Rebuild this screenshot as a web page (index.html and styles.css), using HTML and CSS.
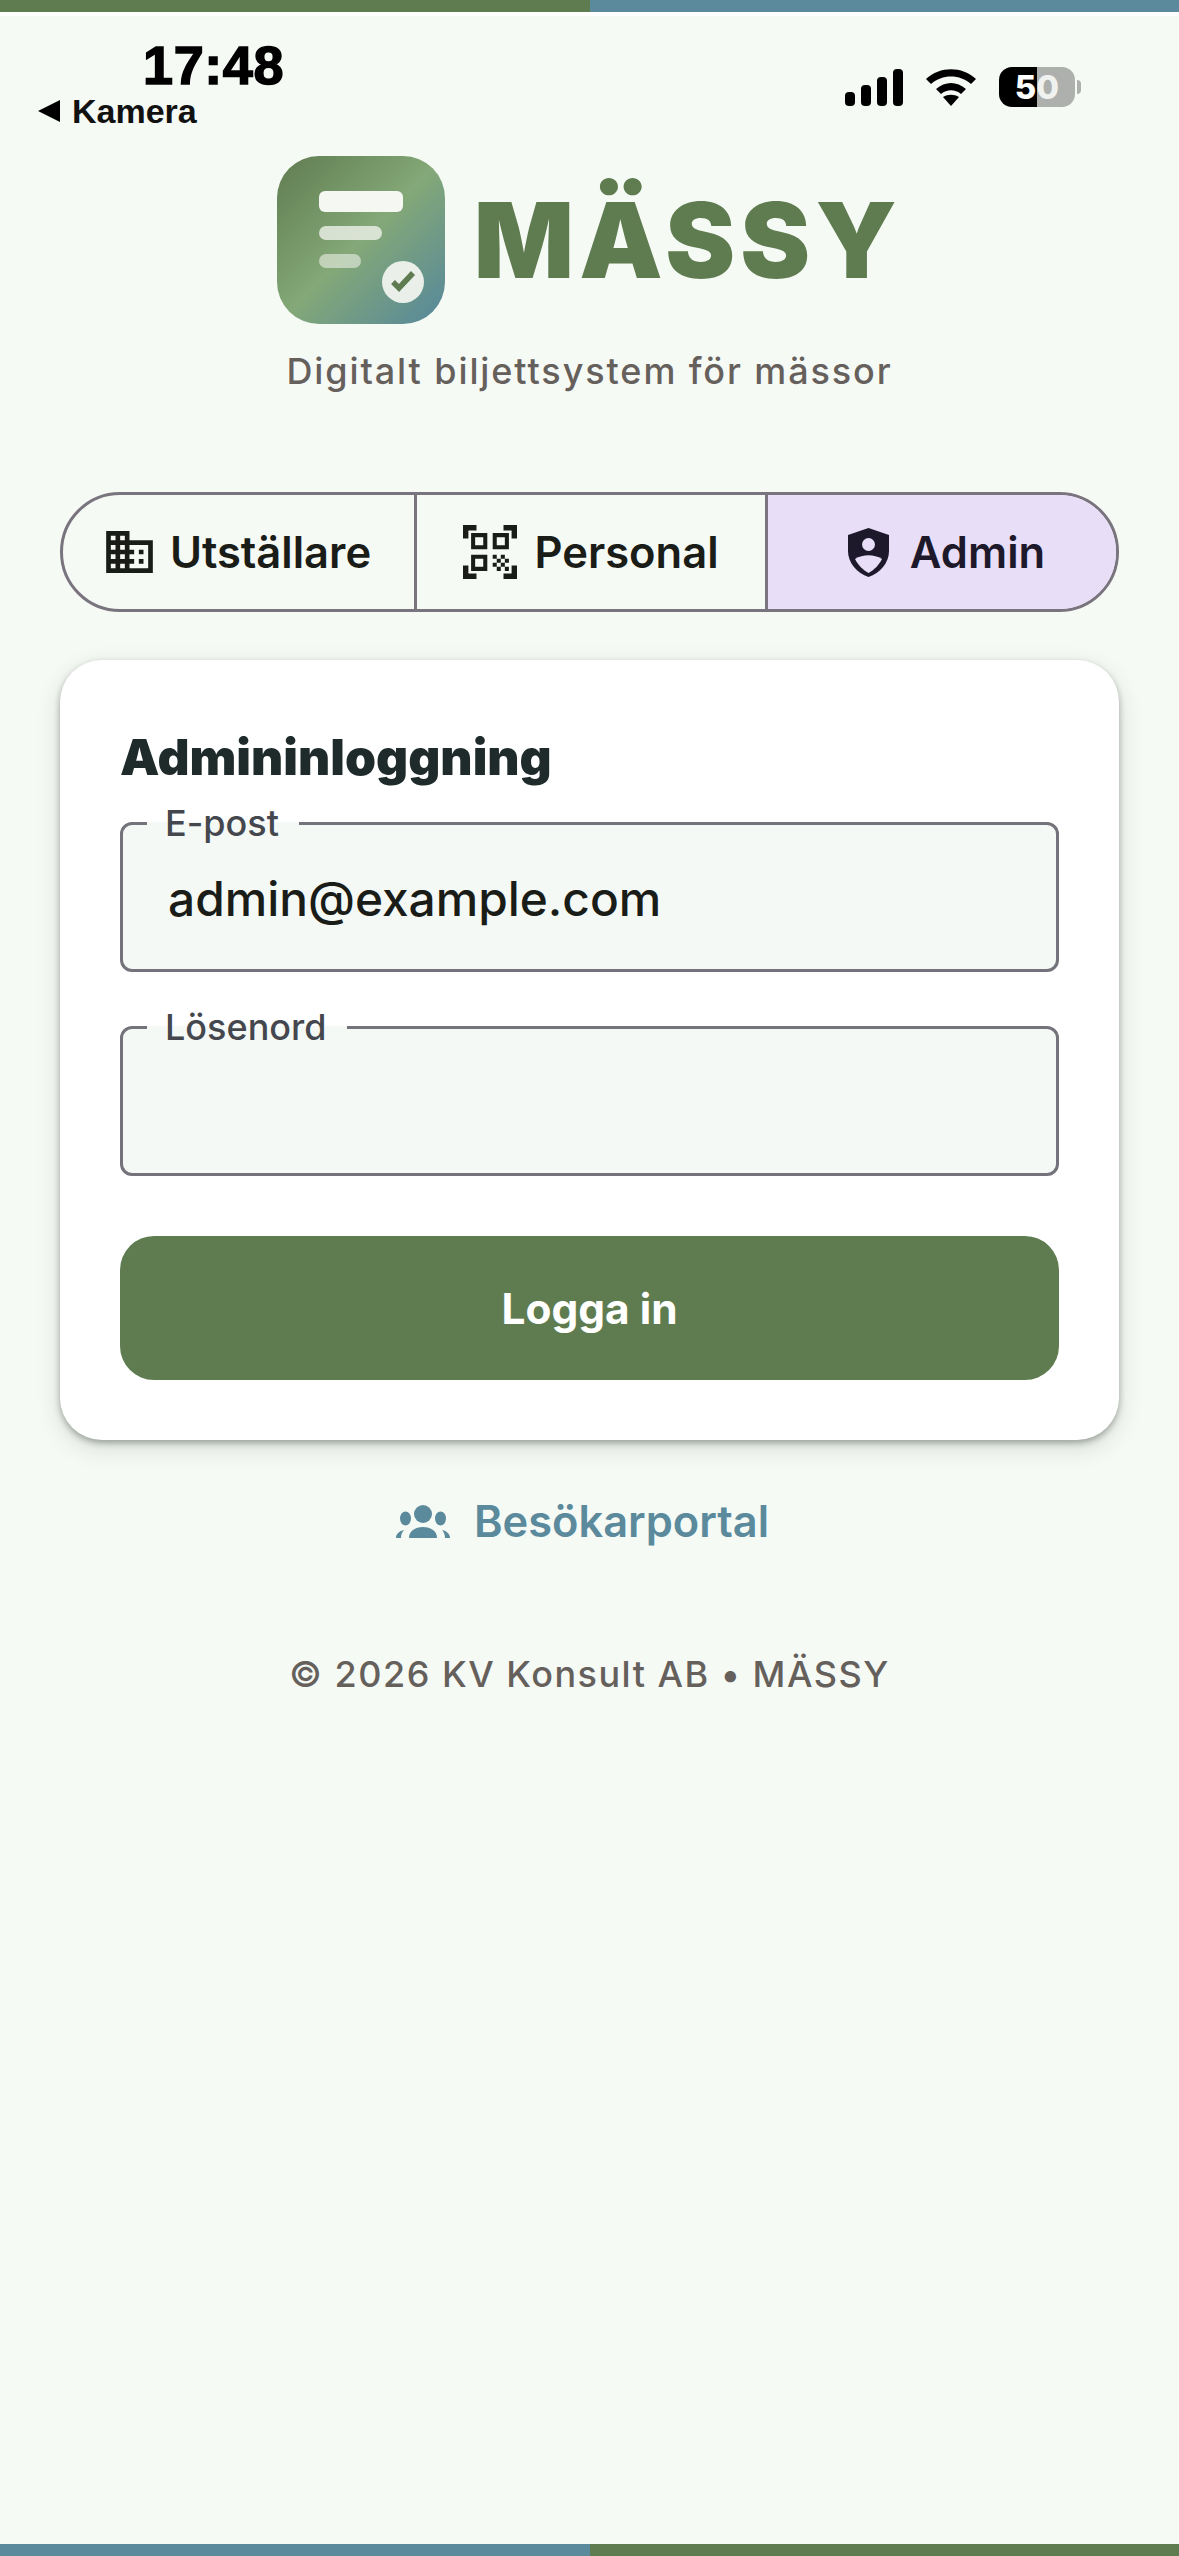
FILE: index.html
```html
<!DOCTYPE html>
<html lang="sv">
<head>
<meta charset="utf-8">
<title>MÄSSY</title>
<link rel="stylesheet" href="styles.css">
</head>
<body>
<div class="page">
  <div class="stripe stripe-top"><span class="green"></span><span class="blue"></span></div>

  <header class="status">
    <div class="status-left">
      <div class="time">17:48</div>
      <div class="back"><span class="back-arrow"></span><span>Kamera</span></div>
    </div>
    <div class="status-right">
      <svg class="signal" viewBox="0 0 58 37" aria-hidden="true">
        <rect x="0" y="23" width="10" height="14" rx="4"/>
        <rect x="16" y="16" width="10" height="21" rx="4"/>
        <rect x="32" y="8" width="10" height="29" rx="4"/>
        <rect x="48" y="0" width="10" height="37" rx="4"/>
      </svg>
      <svg class="wifi" viewBox="0 0 52 38" aria-hidden="true">
        <path d="M1 11C15-2 37-2 51 11l-5 5C35 6 17 6 6 16z"/>
        <path d="M11 21c9-8 21-8 30 0l-5 5c-6-5-14-5-20 0z"/>
        <path d="M18 29c5-3 11-3 16 0l-8 9z"/>
      </svg>
      <div class="battery-wrap">
        <div class="battery"><span class="five">5</span><span class="zero">0</span></div>
        <span class="nub"></span>
      </div>
    </div>
  </header>

  <main class="content">
    <div class="brand">
      <svg class="logo" viewBox="0 0 168 168" aria-hidden="true">
        <defs>
          <linearGradient id="lg" x1="0" y1="0" x2="1" y2="1">
            <stop offset="0" stop-color="#5f7c50"/>
            <stop offset=".5" stop-color="#84a877"/>
            <stop offset="1" stop-color="#55879c"/>
          </linearGradient>
        </defs>
        <rect width="168" height="168" rx="42" fill="url(#lg)"/>
        <rect x="42" y="35" width="84" height="21" rx="6" fill="#f5f7f3"/>
        <rect x="42" y="70" width="63" height="14" rx="7" fill="#f5f7f3" opacity=".75"/>
        <rect x="42" y="98" width="42" height="14" rx="7" fill="#f5f7f3" opacity=".55"/>
        <circle cx="126" cy="126" r="21" fill="#eaf0e9"/>
        <path d="M116 126l6 6 14-15" fill="none" stroke="#5f7c50" stroke-width="5.5"/>
      </svg>
      <h1 class="wordmark">MÄSSY</h1>
    </div>
    <p class="tagline">Digitalt biljettsystem för mässor</p>

    <nav class="tabs">
      <button class="tab" type="button">
        <svg class="ico ico-domain" viewBox="2 3 20 18" aria-hidden="true"><path d="M12 7V3H2v18h20V7H12zM6 19H4v-2h2v2zm0-4H4v-2h2v2zm0-4H4V9h2v2zm0-4H4V5h2v2zm4 12H8v-2h2v2zm0-4H8v-2h2v2zm0-4H8V9h2v2zm0-4H8V5h2v2zm10 12h-8v-2h2v-2h-2v-2h2v-2h-2V9h8v10zm-2-8h-2v2h2v-2zm0 4h-2v2h2v-2z"/></svg>
        <span>Utställare</span>
      </button>
      <button class="tab" type="button">
        <svg class="ico ico-qr" viewBox="2 2 20 20" aria-hidden="true"><path d="M9.5 6.5v3h-3v-3h3M11 5H5v6h6V5zm-1.5 9.5v3h-3v-3h3M11 13H5v6h6v-6zm6.5-6.5v3h-3v-3h3M19 5h-6v6h6V5zm-6 8h1.5v1.5H13V13zm1.5 1.5H16V16h-1.5v-1.5zM16 13h1.5v1.5H16V13zm-3 3h1.5v1.5H13V16zm1.5 1.5H16V19h-1.5v-1.5zM16 16h1.5v1.5H16V16zm1.5-1.5H19V16h-1.5v-1.5zm0 3H19V19h-1.5v-1.5zM22 7h-2V4h-3V2h5v5zm0 15v-5h-2v3h-3v2h5zM2 22h5v-2H4v-3H2v5zM2 2v5h2V4h3V2H2z"/></svg>
        <span>Personal</span>
      </button>
      <button class="tab tab-active" type="button">
        <svg class="ico ico-shield" viewBox="0 0 41 49" aria-hidden="true">
          <path d="M20.5 0L41 7v16c0 12-9 22-20.500 26C9 45 0 35 0 23V7z" fill="#1d192b"/>
          <circle cx="20.500" cy="16.500" r="6.500" fill="#e8def8"/>
          <path d="M7 31c8-5 19-5 27 0-3 6-8 11-13.500 14C15 42 10 37 7 31z" fill="#e8def8"/>
        </svg>
        <span>Admin</span>
      </button>
    </nav>

    <section class="card">
      <h2 class="card-title">Admininloggning</h2>
      <fieldset class="field">
        <legend>E-post</legend>
        <input class="field-input" type="email" value="admin@example.com" aria-label="E-post">
      </fieldset>
      <fieldset class="field field-second">
        <legend>Lösenord</legend>
        <input class="field-input" type="password" aria-label="Lösenord">
      </fieldset>
      <button class="submit" type="button">Logga in</button>
    </section>

    <a class="visitor" href="#">
      <svg class="ico-groups" viewBox="0 0 54 33" aria-hidden="true">
        <circle cx="27" cy="9" r="9"/>
        <ellipse cx="9.500" cy="13.500" rx="5.500" ry="7"/>
        <ellipse cx="44.500" cy="13.500" rx="5.500" ry="7"/>
        <path d="M13 33c0-7 6-11 14-11s14 4 14 11z"/>
        <path d="M0 33c0-4 3-7 8-8-2 2-3 5-3 8z"/>
        <path d="M54 33c0-4-3-7-8-8 2 2 3 5 3 8z"/>
      </svg>
      <span>Besökarportal</span>
    </a>

    <p class="copyright">© 2026 KV Konsult AB • MÄSSY</p>
  </main>

  <div class="stripe stripe-bottom"><span class="blue"></span><span class="green"></span></div>
</div>
</body>
</html>
```

FILE: styles.css
```css
* { box-sizing: border-box; }

html, body {
  margin: 0;
  height: 100%;
}

body {
  background: #f6faf5;
  font-family: Inter, "Liberation Sans", sans-serif;
  color: #1a1c18;
}

.page {
  height: 2556px;
  display: flex;
  flex-direction: column;
  overflow: hidden;
}

.stripe {
  display: flex;
  height: 12px;
  flex: none;
}

.stripe span { flex: 1; }
.green { background: #5f7c50; }
.blue { background: #5b8a9c; }

.stripe-top { box-shadow: 0 4px 0 #ffffff; }

/* status bar */
.status {
  flex: none;
  height: 144px;
  display: flex;
  justify-content: space-between;
  align-items: flex-start;
  padding: 0 98px 0 38px;
}

.status-left {
  display: flex;
  flex-direction: column;
  font-family: "Liberation Sans", Arial, sans-serif;
  font-weight: 700;
  color: #000;
}

.time {
  padding: 26px 0 0 105px;
  font-size: 54px;
  line-height: 54px;
  letter-spacing: 0.6px;
  -webkit-text-stroke: 1.5px #000;
}

.back {
  display: flex;
  align-items: center;
  gap: 12px;
  margin-top: 1px;
  font-size: 34px;
  line-height: 36px;
  color: #111;
}

.back-arrow {
  width: 0;
  height: 0;
  border-top: 11px solid transparent;
  border-bottom: 11px solid transparent;
  border-right: 22px solid #000;
}

.status-right {
  display: flex;
  align-items: center;
  padding-top: 55px;
}

.signal { width: 58px; height: 37px; margin-right: 22px; }
.wifi { width: 52px; height: 38px; margin-right: 22px; }

.battery-wrap {
  display: flex;
  align-items: center;
  gap: 2px;
}

.battery {
  width: 76px;
  height: 40px;
  border-radius: 13px;
  background: linear-gradient(90deg, #000 50%, #adb0ac 50%);
  display: flex;
  justify-content: center;
  align-items: center;
  font-family: Inter, sans-serif;
  font-weight: 800;
  font-size: 33px;
  line-height: 1;
}

.five { color: #fff; }
.zero { color: #f0f2ef; }

.nub {
  width: 4px;
  height: 14px;
  border-radius: 0 4px 4px 0;
  background: #adb0ac;
}

/* brand */
.content {
  flex: 1;
  display: flex;
  flex-direction: column;
  padding: 0 60px;
}

.brand {
  display: flex;
  align-items: center;
  justify-content: center;
  gap: 29px;
}

.logo { width: 168px; height: 168px; flex: none; }

.wordmark {
  margin: 0;
  font-size: 105px;
  font-weight: 900;
  line-height: 168px;
  letter-spacing: 5.3px;
  color: #5f7c50;
}

.tagline {
  margin: 22px 0 0;
  text-align: center;
  font-size: 36px;
  line-height: 50px;
  font-weight: 500;
  letter-spacing: 1.9px;
  color: #66605c;
}

/* tabs */
.tabs {
  display: flex;
  height: 120px;
  margin-top: 96px;
  border: 3px solid #79747e;
  border-radius: 60px;
  overflow: hidden;
}

.tab {
  flex: 1 1 33.33%;
  display: flex;
  align-items: center;
  justify-content: center;
  gap: 17px;
  padding: 0;
  border: 0;
  background: transparent;
  font-family: inherit;
  font-size: 43.5px;
  font-weight: 600;
  color: #1a1c18;
}

.tab + .tab { border-left: 3px solid #79747e; }

.tab-active {
  background: #e8def8;
  color: #1d192b;
  gap: 21px;
  padding-left: 9px;
}

.ico { fill: currentColor; flex: none; }
.ico-domain { width: 47px; height: 42px; }
.ico-qr { width: 54px; height: 54px; }
.ico-shield { width: 41px; height: 49px; }

/* card */
.card {
  margin-top: 48px;
  height: 780px;
  padding: 68px 60px 0;
  display: flex;
  flex-direction: column;
  background: #fff;
  border-radius: 42px;
  box-shadow: 0 3px 6px rgba(30, 40, 30, .35), 0 8px 24px rgba(30, 40, 30, .14);
}

.card-title {
  margin: 0;
  font-size: 49.7px;
  line-height: 58px;
  font-weight: 900;
  color: #1f2a2a;
}

.field {
  margin: 16px 0 0;
  padding: 0 24px 0 24px;
  height: 170px;
  border: 3px solid #74727a;
  border-radius: 12px;
  background: #f5f9f5;
  min-width: 0;
}

.field-second { margin-top: 34px; }

.field legend {
  padding: 0 20px 0 18px;
  margin-left: 0;
  font-size: 36px;
  line-height: 42px;
  font-weight: 500;
  color: #44474e;
}

.field-input {
  display: block;
  width: 100%;
  height: 110px;
  padding: 0 0 0 21px;
  border: 0;
  outline: 0;
  background: transparent;
  font-family: inherit;
  font-size: 47.8px;
  font-weight: 500;
  color: #1a1c18;
}

.submit {
  margin-top: 60px;
  height: 144px;
  border: 0;
  border-radius: 34px;
  background: #5f7c50;
  color: #fff;
  font-family: inherit;
  font-size: 42.4px;
  font-weight: 700;
}

/* links */
.visitor {
  display: flex;
  align-items: center;
  justify-content: center;
  gap: 24px;
  margin-top: 51px;
  padding-right: 14px;
  font-size: 43.4px;
  line-height: 60px;
  font-weight: 600;
  color: #5b8a9c;
  text-decoration: none;
}

.ico-groups { width: 54px; height: 33px; fill: currentColor; flex: none; }

.copyright {
  margin: 98px 0 0;
  text-align: center;
  font-size: 36px;
  line-height: 50px;
  font-weight: 500;
  letter-spacing: 1.5px;
  color: #65605c;
}
```
